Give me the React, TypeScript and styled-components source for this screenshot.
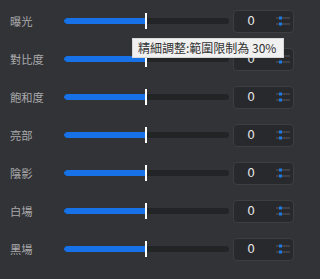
import styled, { createGlobalStyle } from "styled-components";

const GlobalStyle = createGlobalStyle`
  html, body {
    margin: 0;
    padding: 0;
    background: #323337;
  }
  body {
    font-family: "Noto Sans CJK TC", "Noto Sans", sans-serif;
  }
`;

const adjustments = [
  { label: "曝光", value: 0, percent: 49.4 },
  { label: "對比度", value: 0, percent: 49.4 },
  { label: "飽和度", value: 0, percent: 49.4 },
  { label: "亮部", value: 0, percent: 49.4 },
  { label: "陰影", value: 0, percent: 49.4 },
  { label: "白場", value: 0, percent: 49.4 },
  { label: "黑場", value: 0, percent: 49.4 },
];

const SpinIcon = () => (
  <svg width="14" height="10" viewBox="0 0 14 10">
    <rect x="0" y="1.5" width="14" height="1" fill="#5a5b5f" />
    <rect x="0" y="7.5" width="14" height="1" fill="#5a5b5f" />
    <rect x="3" y="0.5" width="3" height="3" fill="#1a7ae6" />
    <rect x="3" y="6.5" width="3" height="3" fill="#1a7ae6" />
  </svg>
);

const App = () => (
  <>
    <GlobalStyle />
    <Panel>
      {adjustments.map((item, i) => (
        <Row key={item.label}>
          <Label>{item.label}</Label>
          <Slider>
            <Track>
              <Fill style={{ width: `${item.percent}%` }} />
            </Track>
            <Thumb style={{ left: `${item.percent}%` }} />
          </Slider>
          <NumberBox>
            <Value>{item.value}</Value>
            <Spin>
              <SpinIcon />
            </Spin>
          </NumberBox>
          {i === 1 && <Tooltip>精細調整:範圍限制為 30%</Tooltip>}
        </Row>
      ))}
    </Panel>
  </>
);

const Panel = styled.div`
  width: 320px;
  height: 279px;
  padding-top: 2px;
  box-sizing: border-box;
  display: flex;
  flex-direction: column;
  position: relative;
`;

const Row = styled.div`
  height: 38px;
  display: grid;
  grid-template-columns: 50px 165px 61px;
  column-gap: 4px;
  align-items: center;
  padding-left: 10px;
  position: relative;
`;

const Label = styled.span`
  font-size: 11.3px;
  color: #a9a9ab;
  white-space: nowrap;
`;

const Slider = styled.div`
  position: relative;
  height: 16px;
  display: flex;
  align-items: center;
`;

const Track = styled.div`
  width: 100%;
  height: 6px;
  border-radius: 3px;
  background: #232426;
  overflow: hidden;
`;

const Fill = styled.div`
  height: 100%;
  background: #1672e6;
  border-radius: 3px 0 0 3px;
`;

const Thumb = styled.div`
  position: absolute;
  top: 0;
  width: 2px;
  height: 16px;
  margin-left: -1px;
  background: #ffffff;
`;

const NumberBox = styled.div`
  height: 23px;
  box-sizing: border-box;
  border: 1px solid #3d3e42;
  border-radius: 4px;
  background: #28292c;
  display: flex;
  align-items: center;
  justify-content: space-between;
  padding: 0 3px 0 7px;
`;

const Value = styled.span`
  font-family: "DejaVu Sans", sans-serif;
  font-size: 12px;
  color: #e6e6e6;
  width: 20px;
  text-align: center;
`;

const Spin = styled.div`
  display: flex;
  align-items: center;
`;

const Tooltip = styled.div`
  position: absolute;
  left: 132px;
  top: -2px;
  height: 20px;
  width: 152px;
  box-sizing: border-box;
  padding: 0 5px;
  background: #f0f0f0;
  border: 1px solid #d8d8d8;
  color: #303030;
  font-size: 12px;
  line-height: 18px;
  white-space: nowrap;
  z-index: 5;
`;

export default App;
